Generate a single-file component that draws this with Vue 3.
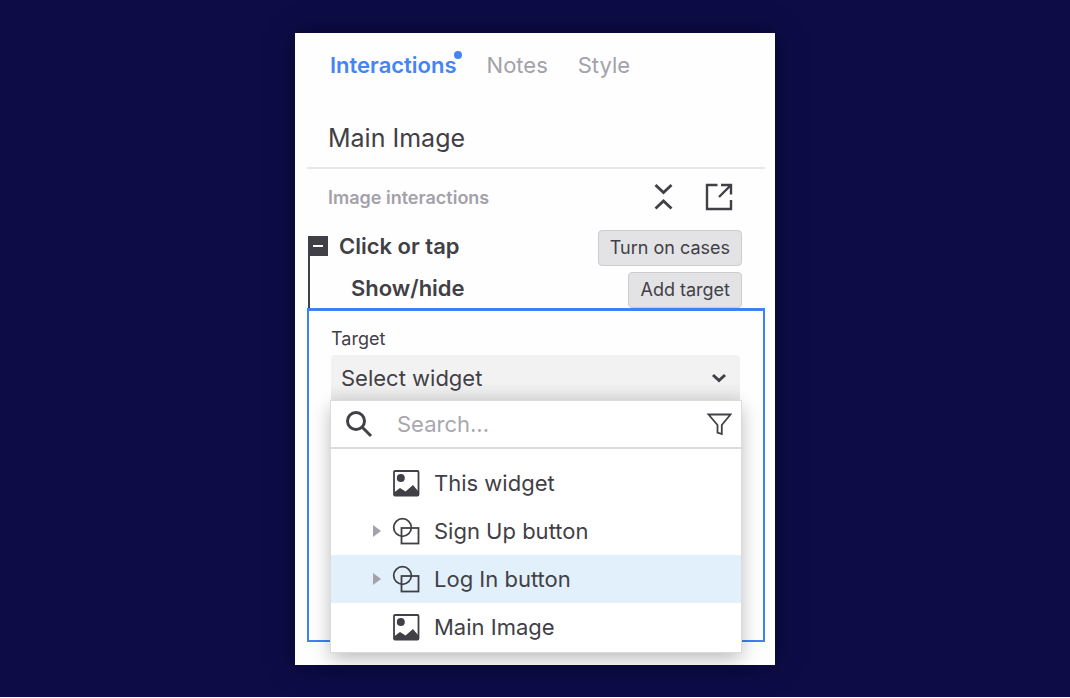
<script setup>
import { ref } from 'vue'

const tabs = ['Interactions', 'Notes', 'Style']
const activeTab = ref('Interactions')

const collapsed = ref(false)
const search = ref('')
const selected = ref('')

const widgets = [
  { id: 1, name: 'This widget', type: 'image' },
  { id: 2, name: 'Sign Up button', type: 'group' },
  { id: 3, name: 'Log In button', type: 'group' },
  { id: 4, name: 'Main Image', type: 'image' },
]
const highlighted = ref(3)
</script>

<template>
  <div class="page">
    <main class="panel">
      <nav class="tabs">
        <button
          v-for="tab in tabs"
          :key="tab"
          type="button"
          class="tab"
          :class="{ active: tab === activeTab }"
          @click="activeTab = tab"
        >
          {{ tab }}
          <span v-if="tab === 'Interactions'" class="dot"></span>
        </button>
      </nav>

      <h1 class="title">Main Image</h1>

      <div class="section-head">
        <h2>Image interactions</h2>
        <div class="tools">
          <button type="button" class="icon-btn" aria-label="Collapse all">
            <svg width="20" height="28" viewBox="0 0 20 28">
              <path class="thick" d="M2.500 2 L10.500 9.500 L18.500 2 M2.500 25.500 L10.500 18 L18.500 25.500" />
            </svg>
          </button>
          <button type="button" class="icon-btn" aria-label="Open in window">
            <svg width="28" height="28" viewBox="0 0 28 28">
              <path d="M12.500 2 H2 V26 H26 V17 M16 2 H26 V11.500 M26 2 L14 14" />
            </svg>
          </button>
        </div>
      </div>

      <!-- event tree -->
      <section class="event">
        <div class="rail">
          <button type="button" class="toggle" aria-label="Collapse event" @click="collapsed = !collapsed"></button>
        </div>
        <div class="event-rows">
          <div class="event-row">
            <strong>Click or tap</strong>
            <button type="button" class="action">Turn on cases</button>
          </div>
          <div class="event-row">
            <strong class="child">Show/hide</strong>
            <button type="button" class="action">Add target</button>
          </div>
        </div>
      </section>

      <section class="target">
        <label for="target">Target</label>
        <div class="picker">
          <select id="target" v-model="selected">
            <option value="">Select widget</option>
            <option v-for="w in widgets" :key="w.id" :value="w.name">{{ w.name }}</option>
          </select>
          <svg class="chevron" width="16" height="10" viewBox="0 0 16 10">
            <path d="M2 2 L8 7.500 L14 2" />
          </svg>

          <div class="menu">
            <div class="search">
              <svg class="glass" width="28" height="28" viewBox="0 0 28 28">
                <circle cx="11" cy="11" r="8.500" />
                <path d="M17 17 L26 26" />
              </svg>
              <input v-model="search" type="text" placeholder="Search..." aria-label="Search widgets">
              <button type="button" class="icon-btn" aria-label="Filter">
                <svg width="26" height="24" viewBox="0 0 26 24">
                  <path class="thin" d="M2.500 2.500 H24.500 L15.800 13 V22 L11.500 20.500 V13 Z" />
                </svg>
              </button>
            </div>
            <ul>
              <li v-for="w in widgets" :key="w.id">
                <button
                  type="button"
                  class="item"
                  :class="{ highlighted: w.id === highlighted }"
                  @mouseenter="highlighted = w.id"
                  @click="selected = w.name"
                >
                  <span class="arrow" :class="{ shown: w.type === 'group' }"></span>
                  <svg v-if="w.type === 'image'" width="28" height="28" viewBox="0 0 28 28">
                    <rect class="line" x="2" y="2" width="24.500" height="24.500" rx="1" />
                    <circle class="solid" cx="8.800" cy="9" r="4" />
                    <path class="solid" d="M2 23.500 L8 19 L13.500 22.500 L21 16 L26 22 V26 H2 Z" />
                  </svg>
                  <svg v-else width="28" height="28" viewBox="0 0 28 28">
                    <circle class="line" cx="10.500" cy="10.500" r="8.800" />
                    <rect class="line" x="9.500" y="11" width="17" height="15.500" />
                  </svg>
                  <span>{{ w.name }}</span>
                </button>
              </li>
            </ul>
          </div>
        </div>
      </section>
    </main>
  </div>
</template>

<style>
body {
  margin: 0;
  background: #fff;
}
</style>

<style scoped>
* {
  box-sizing: border-box;
}

.page {
  min-height: calc(100vh - 1px);
  padding: 33px 16px 32px;
  background: #0d0c47;
  font-family: Inter, "Liberation Sans", sans-serif;
  font-size: 22px;
  color: #414046;
}

.panel {
  max-width: 480px;
  margin: 0 auto;
  padding: 16px 10px 23px 12px;
  background: #fefefe;
  box-shadow: 0 0 24px rgba(0, 0, 20, 0.5);
}

button {
  padding: 0;
  border: 0;
  background: none;
  font: inherit;
  color: inherit;
  cursor: pointer;
}

svg {
  display: block;
  flex: none;
}

.tabs {
  display: flex;
  gap: 30px;
  padding-left: 23px;
}

.tab {
  position: relative;
  line-height: 32px;
  color: #a3a1a9;
}

.tab.active {
  font-weight: 600;
  color: #4584f3;
}

.dot {
  position: absolute;
  top: 2px;
  right: -5px;
  width: 8px;
  height: 8px;
  border-radius: 50%;
  background: #4584f3;
}

.title {
  margin: 41px 0 0;
  padding: 0 21px 13px;
  border-bottom: 2px solid #e8e8ea;
  font-size: 25px;
  font-weight: 400;
  line-height: 32px;
}

.section-head {
  display: flex;
  align-items: center;
  justify-content: space-between;
  height: 56px;
  margin-bottom: 5px;
  padding: 0 32px 0 21px;
}

.section-head h2 {
  margin: 0;
  font-size: 18px;
  font-weight: 600;
  color: #a3a1a9;
}

.tools {
  display: flex;
  gap: 32px;
}

.icon-btn svg {
  fill: none;
  stroke: #414046;
  stroke-width: 2.400;
}

.icon-btn .thick {
  stroke-width: 2.800;
}

.icon-btn .thin {
  stroke-width: 1.800;
}

.event {
  display: flex;
  padding: 0 23px 0 1px;
}

.rail {
  width: 20px;
  padding-top: 6px;
  background: linear-gradient(#414046, #414046) 0 8px / 2px 100% no-repeat;
}

.toggle {
  display: flex;
  align-items: center;
  justify-content: center;
  width: 20px;
  height: 20px;
  background: #414046;
}

.toggle::before {
  content: "";
  width: 10px;
  height: 2px;
  background: #fff;
}

.event-rows {
  display: grid;
  flex: 1;
  gap: 6px;
  padding-left: 11px;
}

.event-row {
  display: flex;
  justify-content: space-between;
}

.event-row strong {
  font-weight: 600;
  line-height: 32px;
}

.event-row .child {
  padding-left: 12px;
}

.action {
  height: 36px;
  padding: 0 11px;
  border: 1px solid #cdcdd1;
  border-radius: 4px;
  background: #e3e3e6;
  font-size: 18px;
  line-height: 24px;
}

.target {
  min-height: 334px;
  padding: 16px 23px 0 22px;
  border: 2px solid #4080f0;
  border-top-width: 3px;
}

.target label {
  display: block;
  margin-bottom: 4px;
  font-size: 18px;
  line-height: 24px;
}

.picker {
  position: relative;
}

select {
  display: block;
  appearance: none;
  width: 100%;
  height: 46px;
  padding: 0 40px 0 10px;
  border: 0;
  border-radius: 4px 4px 0 0;
  background: linear-gradient(#f2f2f2 60%, #e4e4e4);
  font: inherit;
  color: inherit;
}

.chevron {
  position: absolute;
  top: 18px;
  right: 13px;
  fill: none;
  stroke: #414046;
  stroke-width: 3;
  pointer-events: none;
}

.menu {
  position: absolute;
  top: 46px;
  left: 0;
  right: -1px;
  background: #fff;
  box-shadow: 0 0 0 1px #dcdcde, 0 6px 18px rgba(0, 0, 0, 0.28);
}

.search {
  display: flex;
  align-items: center;
  height: 48px;
  padding: 0 9px 0 14px;
  border-bottom: 2px solid #dcdcde;
}

.glass {
  fill: none;
  stroke: #414046;
  stroke-width: 3;
}

.search input {
  flex: 1;
  min-width: 0;
  padding: 0 24px;
  border: 0;
  outline: none;
  background: none;
  font: inherit;
  color: inherit;
}

.search input::placeholder {
  color: #a9a7af;
  opacity: 1;
}

ul {
  margin: 0;
  padding: 10px 0 1px;
  list-style: none;
}

.item {
  display: flex;
  align-items: center;
  width: 100%;
  height: 48px;
  padding-left: 42px;
  text-align: left;
}

.item.highlighted {
  background: #e2f0fc;
}

.item svg {
  margin: 0 14px 0 11px;
}

.arrow {
  width: 8px;
  height: 12px;
}

.arrow.shown {
  background: #a3a1a9;
  clip-path: polygon(0 0, 100% 50%, 0 100%);
}

.line {
  fill: none;
  stroke: #414046;
  stroke-width: 1.800;
}

.solid {
  fill: #414046;
}
</style>
